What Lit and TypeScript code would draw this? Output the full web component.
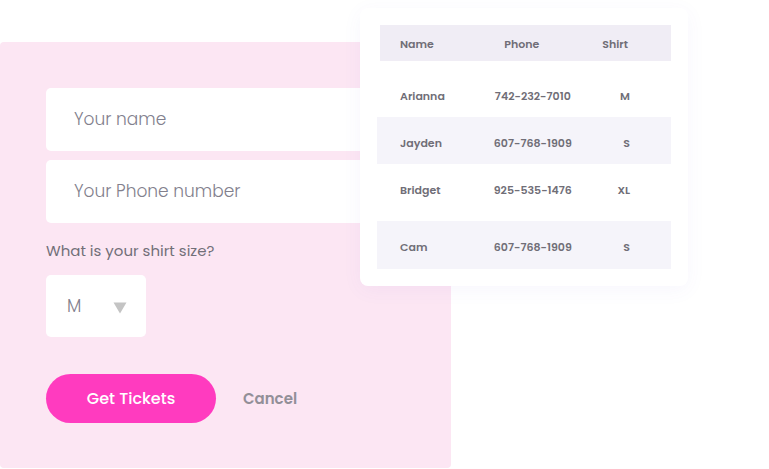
import { LitElement, css, html } from "lit";
import { customElement, property } from "lit/decorators.js";

interface Guest {
  name: string;
  phone: string;
  shirt: string;
}

const GUESTS: Guest[] = [
  { name: "Arianna", phone: "742-232-7010", shirt: "M" },
  { name: "Jayden", phone: "607-768-1909", shirt: "S" },
  { name: "Bridget", phone: "925-535-1476", shirt: "XL" },
  { name: "Cam", phone: "607-768-1909", shirt: "S" },
];

@customElement("ticket-form")
export class TicketForm extends LitElement {
  static styles = css`
    :host {
      display: block;
      box-sizing: border-box;
      padding: 46px 46px 45px;
      border-radius: 4px;
      background: #fce6f3;
    }
    form {
      display: flex;
      flex-direction: column;
    }
    .fields {
      display: flex;
      flex-direction: column;
      gap: 9px;
    }
    input,
    select,
    button {
      box-sizing: border-box;
      margin: 0;
      border: 0;
      font: inherit;
    }
    .field {
      width: 100%;
      height: 63px;
      padding: 0 28px 1px;
      border-radius: 5px;
      background: #fff;
      color: #82808d;
      font-size: 17px;
      font-weight: 300;
    }
    .field::placeholder {
      color: #82808d;
      opacity: 1;
    }
    .question {
      margin: 16px 0 12px;
      color: #716f78;
      font-size: 15px;
      line-height: 24px;
    }
    .size {
      display: grid;
      width: 100px;
      align-items: center;
    }
    .size select {
      grid-area: 1 / 1;
      width: 100%;
      height: 62px;
      padding: 0 21px;
      border-radius: 5px;
      background: #fff;
      color: #82808d;
      font-size: 17px;
      font-weight: 300;
      appearance: none;
    }
    .arrow {
      grid-area: 1 / 1;
      justify-self: end;
      margin: 4px 19px 0 0;
      pointer-events: none;
    }
    .actions {
      display: flex;
      align-items: center;
      gap: 27px;
      margin-top: 37px;
    }
    .submit {
      height: 49px;
      width: 170px;
      border-radius: 25px;
      background: #ff3bbf;
      color: #fff;
      font-size: 16px;
      font-weight: 500;
    }
    .cancel {
      padding: 0;
      background: none;
      color: #928f98;
      font-size: 15px;
      font-weight: 600;
    }
  `;

  render() {
    return html`
      <form @submit=${(e: Event) => e.preventDefault()}>
        <div class="fields">
          <input class="field" type="text" aria-label="Your name" placeholder="Your name" />
          <input class="field" type="tel" aria-label="Your Phone number" placeholder="Your Phone number" />
        </div>
        <label class="question" for="shirt">What is your shirt size?</label>
        <div class="size">
          <select id="shirt">
            <option>S</option>
            <option selected>M</option>
            <option>L</option>
            <option>XL</option>
          </select>
          <svg class="arrow" width="14" height="12" viewBox="0 0 14 12" aria-hidden="true">
            <path d="M0.5 0.5H13.5L7 11.5Z" fill="#c4c4c4" />
          </svg>
        </div>
        <div class="actions">
          <button class="submit" type="submit">Get Tickets</button>
          <button class="cancel" type="button">Cancel</button>
        </div>
      </form>
    `;
  }
}

@customElement("guest-table")
export class GuestTable extends LitElement {
  @property({ attribute: false }) guests: Guest[] = [];

  static styles = css`
    :host {
      display: block;
      box-sizing: border-box;
      padding: 17px;
      border-radius: 8px;
      background: #fff;
      box-shadow: 0 4px 20px rgba(100, 80, 220, 0.05);
    }
    table {
      width: 100%;
      table-layout: fixed;
      border-collapse: separate;
      border-spacing: 0;
      color: #706e77;
      font-size: 11px;
      line-height: 16px;
    }
    .col-name {
      width: 34%;
    }
    .col-phone {
      width: 38%;
    }
    .col-shirt {
      width: 28%;
    }
    th,
    td {
      padding: 18px 0 13px;
      font-weight: 600;
      text-align: center;
    }
    th {
      padding: 11px 0 9px;
      background: #f0edf5;
    }
    .name {
      padding-left: 23px;
      text-align: left;
    }
    th.name {
      padding-left: 20px;
      border-left: 3px solid #fff;
    }
    th.phone {
      padding-right: 22px;
    }
    .shirt {
      padding-right: 41px;
      text-align: right;
    }
    th.shirt {
      padding-right: 43px;
    }
    tbody tr:nth-child(even) {
      background: #f5f4fa;
    }
    tbody tr:first-child td {
      padding-top: 27px;
      padding-bottom: 13px;
    }
    tbody tr:nth-child(3) td {
      padding-bottom: 23px;
    }
    tbody tr:last-child td {
      padding-bottom: 14px;
    }
  `;

  render() {
    return html`
      <table>
        <colgroup>
          <col class="col-name" />
          <col class="col-phone" />
          <col class="col-shirt" />
        </colgroup>
        <thead>
          <tr>
            <th class="name" scope="col">Name</th>
            <th class="phone" scope="col">Phone</th>
            <th class="shirt" scope="col">Shirt</th>
          </tr>
        </thead>
        <tbody>
          ${this.guests.map(
            (g) => html`<tr>
              <td class="name">${g.name}</td>
              <td class="phone">${g.phone}</td>
              <td class="shirt">${g.shirt}</td>
            </tr>`,
          )}
        </tbody>
      </table>
    `;
  }
}

@customElement("app-root")
export class AppRoot extends LitElement {
  static styles = css`
    :host {
      display: block;
      background: #fff;
      font-family: Poppins, Inter, "Open Sans", sans-serif;
    }
    .stage {
      display: grid;
      grid-template-columns: 360fr 91fr 237fr 81fr;
      align-items: start;
    }
    ticket-form {
      grid-area: 1 / 1 / 2 / 3;
      margin-top: 42px;
    }
    guest-table {
      grid-area: 1 / 2 / 2 / 4;
      margin-top: 8px;
    }
  `;

  render() {
    return html`
      <main class="stage">
        <ticket-form></ticket-form>
        <guest-table .guests=${GUESTS}></guest-table>
      </main>
    `;
  }
}
